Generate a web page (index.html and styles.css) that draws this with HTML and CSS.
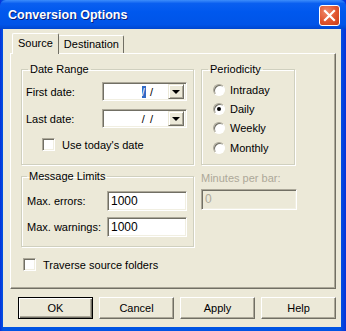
FILE: index.html
```html
<!DOCTYPE html>
<html lang="en">
<head>
    <meta charset="UTF-8">
    <title>Conversion Options</title>
    <link rel="stylesheet" href="styles.css">
</head>
<body>
    <div class="window">
        <!-- Title bar -->
        <div class="titlebar">
            <span class="title">Conversion Options</span>
            <span class="close-btn">
                <svg width="13" height="13" viewBox="0 0 13 13">
                    <path d="M2 2 L11 11 M11 2 L2 11" stroke="#fff" stroke-width="2.2" stroke-linecap="square"/>
                </svg>
            </span>
        </div>

        <div class="client">
            <!-- Tabs -->
            <div class="tabs">
                <span class="tab active">Source</span>
                <span class="tab">Destination</span>
            </div>

            <div class="panel">
                <div class="row">
                    <fieldset class="group date-range">
                        <legend>Date Range</legend>
                        <div class="field">
                            <label>First date:</label>
                            <div class="combo">
                                <span class="combo-text"><span class="caret">/</span> /</span>
                                <span class="drop-btn"><span class="arrow"></span></span>
                            </div>
                        </div>
                        <div class="field">
                            <label>Last date:</label>
                            <div class="combo">
                                <span class="combo-text">/ /</span>
                                <span class="drop-btn"><span class="arrow"></span></span>
                            </div>
                        </div>
                        <div class="check today">
                            <span class="box"></span>
                            <span>Use today's date</span>
                        </div>
                    </fieldset>

                    <fieldset class="group periodicity">
                        <legend>Periodicity</legend>
                        <div class="radio"><span class="dot"></span>Intraday</div>
                        <div class="radio"><span class="dot checked"></span>Daily</div>
                        <div class="radio"><span class="dot"></span>Weekly</div>
                        <div class="radio"><span class="dot"></span>Monthly</div>
                    </fieldset>
                </div>

                <div class="row second">
                    <fieldset class="group limits">
                        <legend>Message Limits</legend>
                        <div class="field">
                            <label>Max. errors:</label>
                            <div class="textbox">1000</div>
                        </div>
                        <div class="field">
                            <label>Max. warnings:</label>
                            <div class="textbox">1000</div>
                        </div>
                    </fieldset>

                    <div class="minutes">
                        <span class="disabled-label">Minutes per bar:</span>
                        <div class="textbox disabled">0</div>
                    </div>
                </div>

                <div class="check traverse">
                    <span class="box"></span>
                    <span>Traverse source folders</span>
                </div>
            </div>

            <!-- Buttons -->
            <div class="buttons">
                <span class="btn default">OK</span>
                <span class="btn">Cancel</span>
                <span class="btn">Apply</span>
                <span class="btn">Help</span>
            </div>
        </div>
    </div>
</body>
</html>
```

FILE: styles.css
```css
/* Base */
body {
    margin: 0;
    padding: 0;
    font-family: "Liberation Sans", Arial, sans-serif;
    font-size: 11px;
    color: #000;
    background: #0054e3;
}

.window {
    width: 346px;
    height: 331px;
    display: flex;
    flex-direction: column;
    background: linear-gradient(to right, #0831d9, #0054e3 3px, #0054e3 340px, #0831d9);
}

/* Title bar */
.titlebar {
    height: 29px;
    display: flex;
    align-items: center;
    justify-content: space-between;
    padding: 0 6px 0 8px;
    background: linear-gradient(#3d8dfb 0%, #0a5ff0 12%, #0058ee 40%, #0054e8 85%, #0046cf 100%);
    border-radius: 6px 6px 0 0;
}

.title {
    color: #fff;
    font-weight: bold;
    font-size: 12.5px;
    text-shadow: 1px 1px #0a1e7a;
    margin-top: 1px;
}

.close-btn {
    width: 21px;
    height: 21px;
    box-sizing: border-box;
    border: 1px solid #fff;
    border-radius: 3px;
    background: radial-gradient(circle at 35% 30%, #f08a6c, #e0542e 55%, #c63c17);
    display: flex;
    align-items: center;
    justify-content: center;
    margin-top: 1px;
}

/* Client area */
.client {
    flex: 1;
    margin: 0 5px 4px 3px;
    background: #ece9d8;
    padding: 4px 5px 0 7px;
    display: flex;
    flex-direction: column;
}

.tabs {
    display: flex;
    align-items: flex-end;
    height: 20px;
    padding-left: 2px;
}

.tab {
    border: 1px solid #fff;
    border-right: 1px solid #716f64;
    border-bottom: none;
    border-radius: 2px 2px 0 0;
    padding: 1px 4px 0 5px;
    height: 16px;
    line-height: 15px;
}

.tab.active {
    padding: 0 5px 0 5px;
    margin-right: -1px;
    position: relative;
    z-index: 1;
    background: #ece9d8;
    margin-bottom: -1px;
    height: 20px;
    line-height: 18px;
}

.panel {
    height: 236px;
    box-sizing: border-box;
    border: 1px solid #fff;
    border-right-color: #716f64;
    border-bottom-color: #716f64;
    box-shadow: inset -1px -1px #aca899;
    padding: 9px 0 0 10px;
    width: 326px;
}

.row {
    display: flex;
    gap: 7px;
}

.row.second {
    margin-top: 5px;
}

/* Group boxes */
.group {
    margin: 0;
    border: 1px solid #d0d0bf;
    border-radius: 0;
    box-shadow: inset 1px 1px #fff, 1px 1px #fff;
    box-sizing: border-box;
}

.group legend {
    padding: 0 2px;
    line-height: 13px;
}

.date-range {
    width: 173px;
    height: 102px;
    padding: 6px 6px 0 4px;
}

.date-range legend {
    margin-left: 2px;
}

.periodicity {
    width: 94px;
    height: 102px;
    padding: 4px 0 0 11px;
}

.periodicity legend {
    margin-left: -5px;
}

.limits {
    width: 173px;
    height: 77px;
    padding: 8px 6px 0 5px;
}

.field {
    display: flex;
    align-items: center;
    justify-content: space-between;
    margin-bottom: 8px;
    white-space: nowrap;
}

.limits .field {
    margin-bottom: 6px;
}

/* Combo box */
.combo {
    width: 85px;
    height: 19px;
    box-sizing: border-box;
    border: 1px solid;
    border-color: #aca899 #fff #fff #aca899;
    box-shadow: inset 1px 1px #716f64, inset -1px -1px #f1efe2;
    background: #fff;
    display: flex;
    align-items: center;
    justify-content: flex-end;
    padding: 2px;
}

.combo-text {
    margin-right: 14px;
    letter-spacing: 1px;
}

.caret {
    background: #316ac5;
    color: #fff;
}

.drop-btn {
    width: 16px;
    height: 15px;
    box-sizing: border-box;
    background: #ece9d8;
    border: 1px solid;
    border-color: #ece9d8 #716f64 #716f64 #ece9d8;
    box-shadow: inset 1px 1px #fff, inset -1px -1px #aca899;
    display: flex;
    align-items: center;
    justify-content: center;
}

.arrow {
    width: 0;
    height: 0;
    border-left: 4px solid transparent;
    border-right: 4px solid transparent;
    border-top: 4px solid #000;
    margin-top: 1px;
}

/* Text boxes */
.textbox {
    width: 80px;
    height: 20px;
    box-sizing: border-box;
    border: 1px solid;
    border-color: #aca899 #fff #fff #aca899;
    box-shadow: inset 1px 1px #716f64, inset -1px -1px #f1efe2;
    background: #fff;
    padding: 2px 3px;
    font-size: 12px;
    line-height: 15px;
}

.textbox.disabled {
    width: 96px;
    height: 21px;
    background: #ece9d8;
    color: #aca899;
    margin-top: 5px;
}

.minutes {
    display: flex;
    flex-direction: column;
    padding-top: 2px;
}

.disabled-label {
    color: #aca899;
}

/* Checkboxes */
.check {
    display: flex;
    align-items: center;
    gap: 7px;
}

.box {
    width: 13px;
    height: 13px;
    box-sizing: border-box;
    border: 1px solid;
    border-color: #aca899 #fff #fff #aca899;
    box-shadow: inset 1px 1px #716f64, inset -1px -1px #f1efe2;
    background: #fff;
}

.today {
    margin: 10px 0 0 16px;
}

.traverse {
    margin: 11px 0 0 2px;
}

/* Radio buttons */
.radio {
    display: flex;
    align-items: center;
    gap: 5px;
    height: 19.3px;
}

.dot {
    width: 12px;
    height: 12px;
    box-sizing: border-box;
    border-radius: 50%;
    border: 1px solid;
    border-color: #aca899 #fff #fff #aca899;
    box-shadow: inset 1px 1px #716f64;
    background: #fff;
    display: flex;
    align-items: center;
    justify-content: center;
}

.dot.checked::after {
    content: "";
    width: 4px;
    height: 4px;
    border-radius: 50%;
    background: #000;
}

/* Bottom buttons */
.buttons {
    display: flex;
    gap: 6px;
    padding: 8px 0 0 8px;
}

.btn {
    width: 75px;
    height: 22px;
    box-sizing: border-box;
    border: 1px solid;
    border-color: #fff #716f64 #716f64 #fff;
    box-shadow: inset -1px -1px #aca899;
    display: flex;
    align-items: center;
    justify-content: center;
}

.btn.default {
    border: 1px solid #000;
    box-shadow: inset 1px 1px #fff, inset -1px -1px #716f64, inset -2px -2px #aca899;
}
```
